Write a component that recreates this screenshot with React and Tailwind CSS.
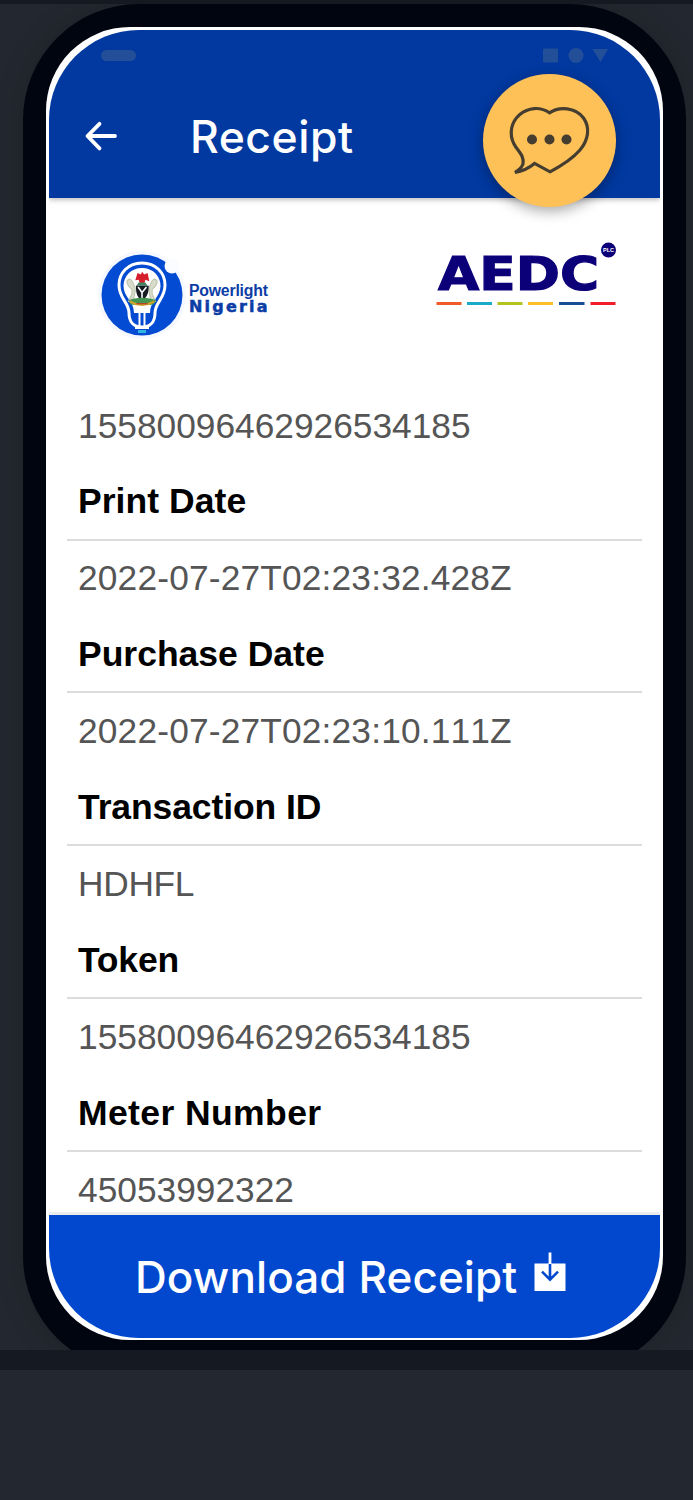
const receipt = [
    { label: "Print Date", value: "2022-07-27T02:23:32.428Z", labelSpacing: "tracking-[0.05px]", valueSpacing: "tracking-[0.17px]" },
    { label: "Purchase Date", value: "2022-07-27T02:23:10.111Z", labelSpacing: "tracking-normal", valueSpacing: "tracking-[0.17px]" },
    { label: "Transaction ID", value: "HDHFL", labelSpacing: "tracking-[-0.1px]", valueSpacing: "tracking-[-0.3px]" },
    { label: "Token", value: "15580096462926534185", labelSpacing: "tracking-[-0.2px]", valueSpacing: "tracking-normal" },
    { label: "Meter Number", value: "45053992322", labelSpacing: "tracking-[0.4px]", valueSpacing: "tracking-normal" },
];

function BackArrow() {
    return (
        <svg className="h-8 w-9" viewBox="0 0 36 32" fill="none" stroke="white" strokeWidth="3.8" strokeLinecap="round" strokeLinejoin="round">
            <path d="M15.5 3.8L3.5 16l12 12.4M4 16h27" />
        </svg>
    );
}

function ChatBubble() {
    return (
        <svg className="h-[133px] w-[133px]" viewBox="0 0 133 133" fill="none">
            <path
                d="M66.5 38.8C57 32.2 45 33.6 36.8 40.5C28 48 25.8 60 31 70C34.5 77 41.5 81 40 90C38.5 94 36 96 32 98.3C40 97 46 94 51.5 89.4L67 97.8C78 92 90.5 83.5 97 76C105.5 66 107.3 53.5 100.5 44C92.5 33.2 76.5 32.2 66.5 38.8Z"
                stroke="#453d30"
                strokeWidth="3.2"
                strokeLinejoin="miter"
            />
            <circle cx="49" cy="65.5" r="5" fill="#453d30" />
            <circle cx="66.5" cy="65.5" r="5" fill="#453d30" />
            <circle cx="83.5" cy="65.5" r="5" fill="#453d30" />
        </svg>
    );
}

function DownloadIcon() {
    return (
        <svg className="h-10 w-8" viewBox="0 0 32 40" fill="none">
            <path d="M0.5 11.5H31.5V39H0.5Z" fill="white" />
            <path d="M16 0.5V12" stroke="white" strokeWidth="2.8" />
            <path d="M16 12V28M8 19.7L16 27.7L24 19.7" stroke="#0148ce" strokeWidth="2.6" />
        </svg>
    );
}

function PowerlightLogo() {
    return (
        <svg className="h-[92px] w-[92px]" viewBox="0 0 92 92" fill="none">
            <circle cx="46" cy="46" r="44" fill="#f5f8fe" />
            <circle cx="46" cy="46" r="40.5" fill="#044bd3" />
            <circle cx="76" cy="17" r="7.5" fill="#fbfcff" />
            <path d="M46 14C32 14 23 24 23 36C23 50 33 53 33 64C33 72 37 78 46 78C55 78 59 72 59 64C59 53 69 50 69 36C69 24 60 14 46 14Z" stroke="white" strokeWidth="3" />
            <path d="M46 19C35 19 27.5 27 27.5 37C27.5 48 38 52 38 64H54C54 52 64.5 48 64.5 37C64.5 27 57 19 46 19Z" fill="white" />
            <path d="M43.5 64V80M48.5 64V80" stroke="white" strokeWidth="2" />
            <path d="M39 78.5H53" stroke="white" strokeWidth="3" />
            <path d="M42 82.5H50" stroke="#2fb3df" strokeWidth="3" />
            {/* coat of arms */}
            <g transform="translate(-5.500 -3.500) scale(1.120)">
                <path d="M37 39C32 35 31 31 35 30C39 32 39 37 40 40L38 50H34L37 43ZM55 39C60 35 61 31 57 30C53 32 53 37 52 40L54 50H58L55 43Z" fill="#d9dccb" stroke="#bcc6ae" />
                <path d="M40 31L42 24.5L45 26L46 23.5L48 26L51 24.5L52.5 32L49 30.5L48 34H44L43 30.5Z" fill="#d71f2b" />
                <path d="M43 33H49L51 36H41Z" fill="#448364" />
                <path d="M40.5 36H52C52 43 50 47 46 49C42 47 40.5 43 40.5 36Z" fill="#151b20" />
                <path d="M42.5 37L46 42V48M50 37L46 42" stroke="white" strokeWidth="1.4" />
                <path d="M34 49C40 46 52 46 58.5 49L56 53H36Z" fill="#459552" />
                <path d="M35 50Q46 56 57 50" stroke="#d2a32a" strokeWidth="1.8" />
                <path d="M41 52H51" stroke="#b84227" strokeWidth="1.2" />
            </g>
        </svg>
    );
}

function AedcLogo() {
    return (
        <svg className="h-[68px] w-[184px]" viewBox="0 0 184 68">
            <text x="2" y="49" textLength="161" lengthAdjust="spacingAndGlyphs" fill="#0c0078" stroke="#0c0078" strokeWidth="1.2" className="font-['DejaVu_Sans'] text-[46px] font-bold">AEDC</text>
            <circle cx="172.5" cy="9" r="7.5" fill="#0c0078" />
            <text x="172.5" y="11.2" textAnchor="middle" fill="white" className="font-['Liberation_Sans'] text-[5.5px] font-bold">PLC</text>
            <path d="M0.5 62.5H25.5" stroke="#f05a28" strokeWidth="3" />
            <path d="M31 62.5H56" stroke="#1aabc8" strokeWidth="3" />
            <path d="M61.5 62.5H86.5" stroke="#b2c41d" strokeWidth="3" />
            <path d="M92 62.5H117" stroke="#fcc024" strokeWidth="3" />
            <path d="M123 62.5H148.5" stroke="#194d96" strokeWidth="3" />
            <path d="M154.5 62.5H179.5" stroke="#f21c2b" strokeWidth="3" />
        </svg>
    );
}

function Header() {
    return (
        <header className="relative z-10 h-[168px] shrink-0 bg-[#0139a1] shadow-[0_2px_5px_rgba(0,0,0,0.25)]">
            <div className="flex h-[50px] items-center justify-between pr-[52px] pl-[52px]">
                <span className="h-[11px] w-[35px] rounded-full bg-[#234e98]" />
                <svg className="h-[15px] w-[65px]" viewBox="0 0 65 15" fill="#234e98">
                    <rect x="0" y="0.5" width="15" height="14" rx="1" />
                    <circle cx="33" cy="7.5" r="7.5" />
                    <path d="M49.5 1H65L57.5 14Z" />
                </svg>
            </div>
            <div className="flex items-center pt-[27px] pl-[35px]">
                <BackArrow />
                <h1 className="ml-[70px] pt-0.5 font-['Inter',sans-serif] text-[44.5px] leading-[56px] font-[450] tracking-[0.5px] text-white">Receipt</h1>
            </div>
            <button className="absolute top-[44px] right-[44.5px] rounded-full bg-[#fdc158] shadow-[0_4px_14px_rgba(0,0,0,0.35)]">
                <ChatBubble />
            </button>
        </header>
    );
}

function ReceiptRow({ label, value, labelSpacing, valueSpacing }) {
    return (
        <div className="h-[152.8px]">
            <div className={`flex h-[76px] items-center border-b-2 border-[#dcdcdc] pt-px pl-[11px] text-[35.5px] font-bold text-black [font-kerning:normal] ${labelSpacing}`}>{label}</div>
            <div className={`flex h-[76.8px] items-center pl-[11px] text-[35.3px] text-[#555] ${valueSpacing}`}>{value}</div>
        </div>
    );
}

export default function App() {
    return (
        <div className="h-[1500px] w-[693px] overflow-hidden bg-[#23272f]">
            <div className="h-[1350px] overflow-hidden border-t-4 border-[#151a22] pl-[23px]">
                <div className="h-[1368px] w-[663px] rounded-[116px] bg-[#01050f] pt-[23px] pl-[23px] shadow-[0_0_30px_rgba(0,0,0,0.15)]">
                    <div className="h-[1313px] w-[617px] rounded-[84px] bg-white px-[3px] pt-[3px] pb-[2px]">
                        <div className="flex h-full flex-col overflow-hidden rounded-[90px] bg-white font-['Liberation_Sans',Arial,sans-serif]">
                            <Header />
                            <main className="min-h-0 flex-1 overflow-hidden px-[18px] [font-kerning:none]">
                                <div className="flex items-start justify-between pt-[43px] pr-[22px] pl-[29px]">
                                    <div className="flex items-center pt-2">
                                        <PowerlightLogo />
                                        <div className="ml-px pt-[6px] text-[#0c3da6]">
                                            <div className="text-[15.8px] leading-[17px] font-bold tracking-[-0.2px]">Powerlight</div>
                                            <div className="font-['DejaVu_Sans'] text-[16px] leading-[16px] font-black tracking-[2.2px] [-webkit-text-stroke:0.5px_#0c3da6]">Nigeria</div>
                                        </div>
                                    </div>
                                    <AedcLogo />
                                </div>
                                <div className="mt-[46.5px] flex h-[77px] items-center pl-[11px] text-[35.3px] text-[#555]">15580096462926534185</div>
                                {receipt.map((row) => (
                                    <ReceiptRow key={row.label} {...row} />
                                ))}
                            </main>
                            <footer className="flex h-[126px] shrink-0 items-center border-t-[3px] border-[#ececec] bg-[#0148ce] pl-[86px] text-white">
                                <span className="pt-px font-['Inter',sans-serif] text-[44px] font-[450] tracking-[0.1px]">Download Receipt</span>
                                <span className="mb-2.5 ml-[17px]">
                                    <DownloadIcon />
                                </span>
                            </footer>
                        </div>
                    </div>
                </div>
            </div>
            <div className="h-5 bg-[#151a22]" />
        </div>
    );
}
